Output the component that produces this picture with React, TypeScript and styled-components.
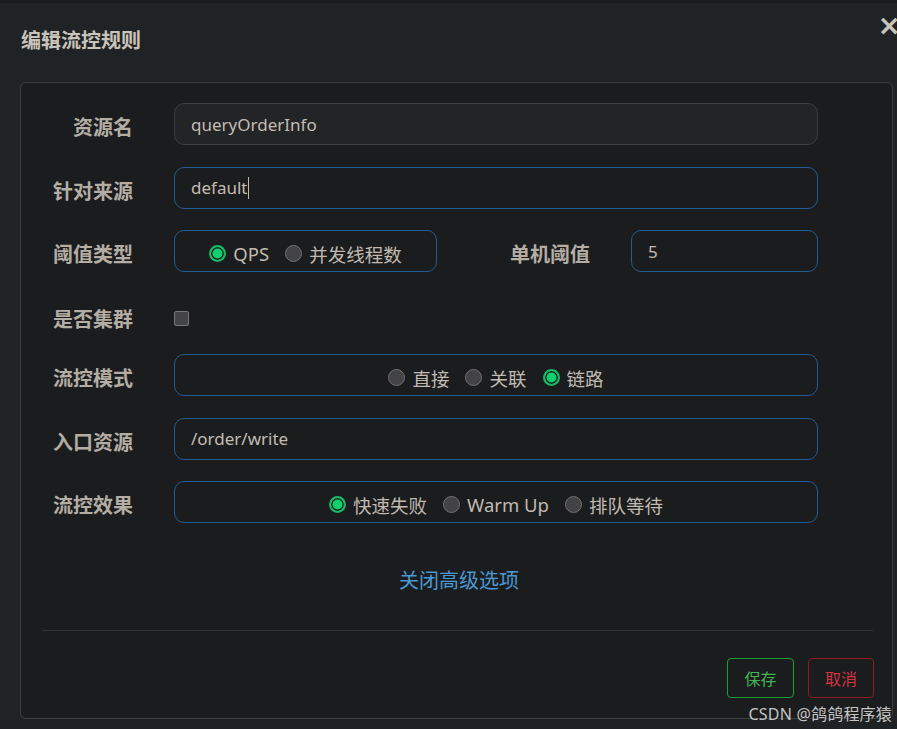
import React from "react";
import styled, { createGlobalStyle } from "styled-components";

const Global = createGlobalStyle`
  html, body { margin: 0; padding: 0; background: #1f2225; }
  body { font-family: "Noto Sans", "Noto Sans CJK SC", sans-serif; }
  #root { width: 897px; height: 729px; overflow: hidden; position: relative; background: #1f2225; }
  * { box-sizing: border-box; }
`;

const TopStrip = styled.div`
  height: 3px;
  background: #191b1c;
`;

const Dialog = styled.div`
  width: 913px;
  background: #202326;
`;

const Header = styled.div`
  height: 79px;
  display: flex;
  align-items: center;
  justify-content: space-between;
  padding: 0 12px 6px 21px;
`;

const Title = styled.h4`
  margin: 0;
  font-size: 20px;
  font-weight: 700;
  color: #c9c3ba;
  font-family: "Noto Sans CJK SC", sans-serif;
`;

const Close = styled.span`
  font-size: 28px;
  font-weight: 700;
  color: #c9c3ba;
  line-height: 1;
  margin-top: -28px;
  font-family: "DejaVu Sans", sans-serif;
`;

const Panel = styled.div`
  margin: 0 20px;
  height: 637px;
  background: #1b1c1e;
  border: 1px solid #3b3e41;
  border-radius: 6px;
  display: flex;
  flex-direction: column;
`;

const Form = styled.div`
  padding: 20px 74px 0 0;
  display: flex;
  flex-direction: column;
  gap: 21.5px;
`;

const Row = styled.div<{ $short?: boolean }>`
  display: flex;
  align-items: ${(p) => (p.$short ? "flex-end" : "center")};
  height: ${(p) => (p.$short ? "39px" : "42px")};
`;

const Label = styled.label<{ $width?: number }>`
  width: ${(p) => p.$width ?? 112}px;
  flex-shrink: 0;
  margin-right: 41px;
  padding-top: 6px;
  text-align: right;
  font-size: 20px;
  line-height: 28px;
  font-weight: 700;
  color: #b3ada4;
  font-family: "Noto Sans CJK SC", sans-serif;
`;

const Input = styled.div<{ $disabled?: boolean; $width?: number }>`
  ${(p) => (p.$width ? `width: ${p.$width}px; flex-shrink: 0;` : "flex: 1;")}
  height: 42px;
  border-radius: 10px;
  border: 1px solid ${(p) => (p.$disabled ? "#3d3f42" : "#225c93")};
  background: ${(p) => (p.$disabled ? "#232426" : "#1b1c1e")};
  display: flex;
  align-items: center;
  padding: 0 16px 0;
  font-size: 17px;
  color: #c2bcb3;
  font-family: "Noto Sans", "Noto Sans CJK SC", sans-serif;
`;

const Caret = styled.span`
  display: inline-block;
  width: 1px;
  height: 22px;
  background: #c2bcb3;
  margin-left: 1px;
`;

const RadioGroup = styled.div<{ $width?: number }>`
  ${(p) => (p.$width ? `width: ${p.$width}px; flex-shrink: 0;` : "flex: 1;")}
  height: 42px;
  border-radius: 10px;
  border: 1px solid #225c93;
  display: flex;
  align-items: center;
  justify-content: center;
  gap: 16px;
  padding-top: 5px;
`;

const RadioItem = styled.span`
  display: inline-flex;
  align-items: center;
  gap: 7px;
  font-size: 18.5px;
  color: #c0bab1;
  font-family: "Noto Sans", "Noto Sans CJK SC", sans-serif;
  white-space: nowrap;
`;

const Dot = styled.span<{ $on?: boolean }>`
  width: 17px;
  height: 17px;
  border-radius: 50%;
  flex-shrink: 0;
  margin-top: -1px;
  background: ${(p) => (p.$on ? "#0fd06e" : "#434345")};
  border: ${(p) => (p.$on ? "2px solid #18b864" : "1.5px solid #707070")};
  box-shadow: ${(p) => (p.$on ? "inset 0 0 0 1.5px #1b1c1e" : "none")};
`;

const Checkbox = styled.span`
  width: 15px;
  height: 15px;
  margin-bottom: 7px;
  border-radius: 2px;
  background: #444446;
  border: 1.5px solid #77777a;
`;

const Radio = ({ on, children }: { on?: boolean; children: React.ReactNode }) => (
  <RadioItem>
    <Dot $on={on} />
    {children}
  </RadioItem>
);

const Toggle = styled.a`
  align-self: center;
  margin: 43px 0 0 5px;
  font-size: 20px;
  line-height: 28px;
  color: #4a98d2;
  font-family: "Noto Sans CJK SC", sans-serif;
`;

const Divider = styled.div`
  margin: 36px 19px 0 21px;
  height: 1px;
  background: #2f3134;
`;

const Footer = styled.div`
  display: flex;
  justify-content: flex-end;
  gap: 14px;
  padding: 27px 18px 0 0;
`;

const Button = styled.button<{ $tone: "ok" | "cancel" }>`
  height: 40px;
  width: ${(p) => (p.$tone === "ok" ? 67 : 66)}px;
  border-radius: 4px;
  background: transparent;
  border: 1px solid ${(p) => (p.$tone === "ok" ? "#1e9b38" : "#8c1b25")};
  color: ${(p) => (p.$tone === "ok" ? "#3fb655" : "#d33442")};
  font-size: 16px;
  font-family: "Noto Sans CJK SC", sans-serif;
  padding: 0;
`;

const Watermark = styled.div`
  position: absolute;
  right: 5px;
  bottom: 4px;
  font-size: 16px;
  color: #c4c4c4;
  font-family: "Noto Sans", "Noto Sans CJK SC", sans-serif;
  letter-spacing: 0.2px;
`;

export default function App() {
  return (
    <>
      <Global />
      <TopStrip />
      <Dialog>
        <Header>
          <Title>编辑流控规则</Title>
          <Close>×</Close>
        </Header>
        <Panel>
          <Form>
            <Row>
              <Label>资源名</Label>
              <Input $disabled>queryOrderInfo</Input>
            </Row>
            <Row>
              <Label>针对来源</Label>
              <Input>
                default
                <Caret />
              </Input>
            </Row>
            <Row>
              <Label>阈值类型</Label>
              <RadioGroup $width={263}>
                <Radio on>QPS</Radio>
                <Radio>并发线程数</Radio>
              </RadioGroup>
              <Label $width={153}>单机阈值</Label>
              <Input>5</Input>
            </Row>
            <Row $short>
              <Label>是否集群</Label>
              <Checkbox />
            </Row>
            <Row>
              <Label>流控模式</Label>
              <RadioGroup>
                <Radio>直接</Radio>
                <Radio>关联</Radio>
                <Radio on>链路</Radio>
              </RadioGroup>
            </Row>
            <Row>
              <Label>入口资源</Label>
              <Input>/order/write</Input>
            </Row>
            <Row>
              <Label>流控效果</Label>
              <RadioGroup>
                <Radio on>快速失败</Radio>
                <Radio>Warm Up</Radio>
                <Radio>排队等待</Radio>
              </RadioGroup>
            </Row>
          </Form>
          <Toggle>关闭高级选项</Toggle>
          <Divider />
          <Footer>
            <Button $tone="ok">保存</Button>
            <Button $tone="cancel">取消</Button>
          </Footer>
        </Panel>
      </Dialog>
      <Watermark>CSDN @鸽鸽程序猿</Watermark>
    </>
  );
}
